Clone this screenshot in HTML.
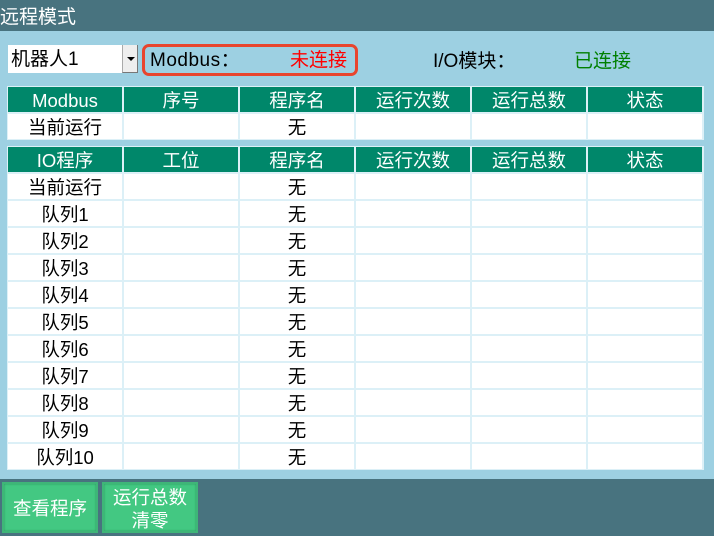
<!DOCTYPE html>
<html><head><meta charset="utf-8"><style>
*{margin:0;padding:0;box-sizing:border-box}
body{width:714px;height:536px;overflow:hidden;background:#48737f;font-family:"Liberation Sans","Noto Sans CJK SC",sans-serif;position:relative}
.title{position:absolute;left:0;top:7px;color:#fff;font-size:19px;line-height:22px}
.panel{position:absolute;left:0;top:31px;width:714px;height:448px;background:#9dd0e2}
.sel{position:absolute;left:8px;top:45px;width:130px;height:28px;background:#fff;font-size:19px;line-height:30px;padding-left:3px;color:#000}
.sel .btn{position:absolute;right:0;top:0;width:16px;height:28px;background:#eee;border-left:1px solid #aaa;border-bottom:1px solid #777;border-right:1px solid #777}
.sel .btn:after{content:"";position:absolute;left:4px;top:12px;border-left:4px solid transparent;border-right:4px solid transparent;border-top:4px solid #000}
.mb{position:absolute;left:142px;top:44px;width:216px;height:32px;border:3px solid #e8452e;border-radius:7px}
.t{position:absolute;font-size:19px;line-height:24px}
.grid{position:absolute;left:7px;width:697px;display:grid;grid-template-columns:repeat(6,114px);gap:2px;padding:1px;background:#dcf0f7}
.grid div{height:25px;line-height:27px;text-align:center;font-size:18.5px;background:#fff;color:#000}
.grid div.h{background:#00876a;color:#fff}
.b{position:absolute;top:482px;height:51px;width:96px;background:#43c882;color:#fff;font-size:18.5px;text-align:center;border:2px solid #3fb578;box-shadow:inset 0 0 2px #2a9a60;display:flex;align-items:center;justify-content:center;line-height:23px;padding-top:2px}
</style></head><body>
<div class="title">远程模式</div>
<div class="panel"></div>
<div class="sel">机器人1<span class="btn"></span></div>
<div class="mb"></div>
<div class="t" style="left:150px;top:49px;letter-spacing:0.5px">Modbus：</div>
<div class="t" style="left:290px;top:49px;color:#f00">未连接</div>
<div class="t" style="left:433px;top:50px">I/O模块：</div>
<div class="t" style="left:574px;top:50px;color:#008000">已连接</div>
<div class="grid" style="top:86px">
<div class="h">Modbus</div><div class="h">序号</div><div class="h">程序名</div><div class="h">运行次数</div><div class="h">运行总数</div><div class="h">状态</div>
<div>当前运行</div><div></div><div>无</div><div></div><div></div><div></div>
</div>
<div class="grid" style="top:146px">
<div class="h">IO程序</div><div class="h">工位</div><div class="h">程序名</div><div class="h">运行次数</div><div class="h">运行总数</div><div class="h">状态</div>
<div>当前运行</div><div></div><div>无</div><div></div><div></div><div></div>
<div>队列1</div><div></div><div>无</div><div></div><div></div><div></div>
<div>队列2</div><div></div><div>无</div><div></div><div></div><div></div>
<div>队列3</div><div></div><div>无</div><div></div><div></div><div></div>
<div>队列4</div><div></div><div>无</div><div></div><div></div><div></div>
<div>队列5</div><div></div><div>无</div><div></div><div></div><div></div>
<div>队列6</div><div></div><div>无</div><div></div><div></div><div></div>
<div>队列7</div><div></div><div>无</div><div></div><div></div><div></div>
<div>队列8</div><div></div><div>无</div><div></div><div></div><div></div>
<div>队列9</div><div></div><div>无</div><div></div><div></div><div></div>
<div>队列10</div><div></div><div>无</div><div></div><div></div><div></div>
</div>
<div class="b" style="left:2px">查看程序</div>
<div class="b" style="left:102px">运行总数<br>清零</div>
</body></html>
